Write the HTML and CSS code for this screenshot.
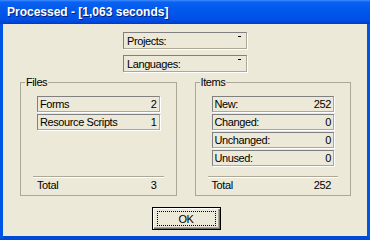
FILE: index.html
```html
<!DOCTYPE html>
<html>
<head>
  <meta charset="UTF-8">
  <title>Processed</title>
  <link rel="stylesheet" href="styles.css">
</head>
<body>
  <div class="window">
    <div class="titlebar">
      <span class="title">Processed - [1,063 seconds]</span>
    </div>

    <div class="content">
      <div class="selectors">
        <div class="combo sunken"><span>Projects:</span><i class="arrow"></i></div>
        <div class="combo sunken"><span>Languages:</span><i class="arrow"></i></div>
      </div>

      <div class="groups">
        <fieldset class="group">
          <legend>Files</legend>
          <div class="rows">
            <div class="field sunken"><span>Forms</span><span>2</span></div>
            <div class="field sunken"><span>Resource Scripts</span><span>1</span></div>
          </div>
          <div class="total"><span>Total</span><span>3</span></div>
        </fieldset>

        <fieldset class="group">
          <legend>Items</legend>
          <div class="rows">
            <div class="field sunken"><span>New:</span><span>252</span></div>
            <div class="field sunken"><span>Changed:</span><span>0</span></div>
            <div class="field sunken"><span>Unchanged:</span><span>0</span></div>
            <div class="field sunken"><span>Unused:</span><span>0</span></div>
          </div>
          <div class="total"><span>Total</span><span>252</span></div>
        </fieldset>
      </div>

      <div class="actions">
        <button class="btn-default"><span class="focus">OK</span></button>
      </div>
    </div>
  </div>
</body>
</html>
```

FILE: styles.css
```css
body {
  margin: 0;
  font-family: "Liberation Sans", Arial, sans-serif;
  font-size: 11px;
  letter-spacing: -0.4px;
  color: #000;
  background: #ece9d8;
}

.window {
  width: 370px;
  height: 240px;
  display: flex;
  flex-direction: column;
}

.titlebar {
  flex: none;
  height: 24px;
  box-sizing: border-box;
  padding: 1px 0 0 7px;
  line-height: 23px;
  background: linear-gradient(#3d8cff 0, #0a62f2 2px, #0058ec 45%, #0050e4 85%, #0042d4 100%);
  border-bottom: 1px solid #003cc8;
}

.title {
  color: #fff;
  font-weight: bold;
  font-size: 12px;
  letter-spacing: 0;
  text-shadow: 1px 1px 0 #0a1d7a;
}

.content {
  flex: 1;
  display: flex;
  flex-direction: column;
  background: #ece9d8;
  border-left: 3px solid #0054e3;
  border-right: 3px solid #0054e3;
  border-bottom: 4px solid #0049d8;
  padding-top: 8px;
}

.selectors {
  display: flex;
  flex-direction: column;
  align-items: center;
  gap: 6px;
}

.sunken {
  border: 1px solid;
  border-color: #808080 #aca899 #aca899 #808080;
  box-shadow: 1px 1px 0 #fff;
  box-sizing: border-box;
}

.combo {
  width: 124px;
  height: 17px;
  display: flex;
  justify-content: space-between;
  align-items: center;
  padding: 0 5px 0 3px;
}

.arrow {
  align-self: flex-start;
  margin-top: 3px;
  width: 3px;
  height: 1px;
  background: #000;
}

.groups {
  display: flex;
  gap: 18px;
  margin-top: 4px;
  padding: 0 16px 0 17px;
}

.group {
  flex: 1;
  min-width: 0;
  height: 120px;
  margin: 0;
  box-sizing: border-box;
  padding: 7px 16px 3px 16px;
  border: 1px solid #aca899;
  display: flex;
  flex-direction: column;
}

.group legend {
  padding: 0 1px;
  margin-left: -12px;
  line-height: 13px;
}

.rows {
  display: flex;
  flex-direction: column;
  gap: 2px;
}

.field {
  height: 16px;
  display: flex;
  justify-content: space-between;
  align-items: center;
  padding: 0 2px 0 2px;
}

.total {
  margin: auto -4px 0 -4px;
  border-top: 1px solid #aca899;
  box-shadow: inset 0 1px 0 #fff;
  display: flex;
  justify-content: space-between;
  padding: 2px 7px 0 4px;
  line-height: 13px;
}

.actions {
  display: flex;
  justify-content: center;
  margin-top: 11px;
  padding-left: 2px;
}

.btn-default {
  width: 69px;
  height: 23px;
  padding: 3px;
  border: 1px solid #000;
  background: #ece9d8;
  box-shadow: inset 1px 1px 0 #fff, inset -1px -1px 0 #716f64, inset -2px -2px 0 #aca899;
  font: inherit;
  letter-spacing: inherit;
  color: #000;
}

.focus {
  display: flex;
  align-items: center;
  justify-content: center;
  height: 100%;
  border: 1px dotted #000;
  box-sizing: border-box;
  margin: 0 1px;
}
```
